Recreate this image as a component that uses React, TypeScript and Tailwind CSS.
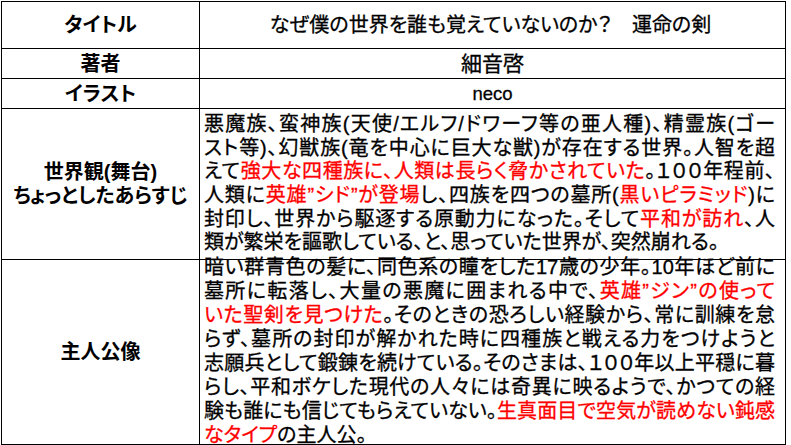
import React from "react";

type Seg = string | { r: string };

const R = (s: string) => ({ r: s });

const world: Seg[][] = [
  ["悪魔族、蛮神族(天使/エルフ/ドワーフ等の亜人種)、精霊族(ゴー"],
  ["スト等)、幻獣族(竜を中心に巨大な獣)が存在する世界。人智を超"],
  ["えて", R("強大な四種族に、人類は長らく脅かされていた"), "。１００年程前、"],
  ["人類に", R("英雄”シド”が登場"), "し、四族を四つの墓所(", R("黒いピラミッド"), ")に"],
  ["封印し、世界から駆逐する原動力になった。そして", R("平和が訪れ"), "、人"],
  ["類が繁栄を謳歌している、と、思っていた世界が、突然崩れる。"],
];

const hero: Seg[][] = [
  ["暗い群青色の髪に、同色系の瞳をした17歳の少年。10年ほど前に"],
  ["墓所に転落し、大量の悪魔に囲まれる中で、", R("英雄”ジン”の使って")],
  [R("いた聖剣を見つけた"), "。そのときの恐ろしい経験から、常に訓練を怠"],
  ["らず、墓所の封印が解かれた時に四種族と戦える力をつけようと"],
  ["志願兵として鍛錬を続けている。そのさまは、１００年以上平穏に暮"],
  ["らし、平和ボケした現代の人々には奇異に映るようで、かつての経"],
  ["験も誰にも信じてもらえていない。", R("生真面目で空気が読めない鈍感")],
  [R("なタイプ"), "の主人公。"],
];

function Lines({ lines }: { lines: Seg[][] }) {
  return (
    <>
      {lines.map((line, i) => (
        <div
          key={i}
          className={
            "whitespace-nowrap " +
            (i < lines.length - 1 ? "[text-align-last:justify] text-justify" : "")
          }
        >
          {line.map((s, j) =>
            typeof s === "string" ? (
              <span key={j}>{s}</span>
            ) : (
              <span key={j} className="text-[#f00]">
                {s.r}
              </span>
            )
          )}
        </div>
      ))}
    </>
  );
}

const font =
  "font-['Liberation_Sans','Noto_Sans_CJK_JP',sans-serif] [font-feature-settings:'palt']";

const heavy = "[-webkit-text-stroke:0.3px]";

export default function App() {
  return (
    <div className={"w-[791px] h-[445px] bg-white pt-[1px] pl-[1px] text-black " + font}>
      <div className="grid w-[785px] grid-cols-[198px_1fr] grid-rows-[47px_30px_30px_151px_185px] border-l border-t border-black text-[20px]">
        <div className="flex items-center justify-center border-b border-r border-black font-bold">タイトル</div>
        <div className={"flex items-center justify-center border-b border-r border-black pr-[4px] " + heavy}>
          なぜ僕の世界を誰も覚えていないのか？　運命の剣
        </div>

        <div className="flex items-center justify-center border-b border-r border-black font-bold">著者</div>
        <div className={"flex items-center justify-center border-b border-r border-black text-[21px] " + heavy}>細音啓</div>

        <div className="flex items-center justify-center border-b border-r border-black font-bold">イラスト</div>
        <div className={"flex items-center justify-center border-b border-r border-black text-[18.5px] " + heavy}>neco</div>

        <div className="flex flex-col items-center justify-center border-b border-r border-black font-bold leading-[24px]">
          <div>世界観(舞台)</div>
          <div>ちょっとしたあらすじ</div>
        </div>
        <div className={"flex flex-col justify-center border-b border-r border-black pl-[4px] pr-[10px] leading-[23.6px] " + heavy}>
          <Lines lines={world} />
        </div>

        <div className="flex items-center justify-center border-b border-r border-black font-bold">主人公像</div>
        <div className={"flex flex-col justify-center border-b border-r border-black pl-[4px] pr-[10px] leading-[23.9px] " + heavy}>
          <Lines lines={hero} />
        </div>
      </div>
    </div>
  );
}
